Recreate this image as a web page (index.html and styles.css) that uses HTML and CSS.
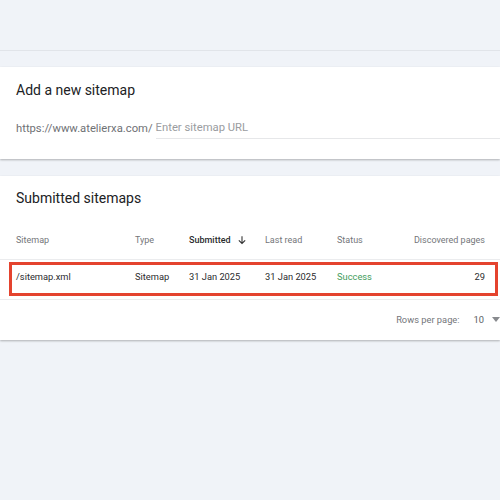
FILE: index.html
```html
<!DOCTYPE html>
<html>
<head>
<meta charset="utf-8">
<link rel="stylesheet" href="styles.css">
</head>
<body>
<div class="topbar"></div>
<section class="card card-add">
  <h2 class="card-title">Add a new sitemap</h2>
  <div class="url-row">
    <span class="prefix">https://www.atelierxa.com/</span>
    <span class="input">Enter sitemap URL</span>
  </div>
</section>
<section class="card card-list">
  <h2 class="card-title">Submitted sitemaps</h2>
  <div class="grid head">
    <span>Sitemap</span>
    <span>Type</span>
    <span class="sorted">Submitted <svg class="arrow" viewBox="0 0 12 12" width="10" height="10"><path d="M6 1.5v8.5M2.2 6.4L6 10.2l3.8-3.8" fill="none" stroke="#333" stroke-width="1.3"/></svg></span>
    <span>Last read</span>
    <span>Status</span>
    <span class="num">Discovered pages</span>
  </div>
  <div class="grid row">
    <span>/sitemap.xml</span>
    <span>Sitemap</span>
    <span>31 Jan 2025</span>
    <span>31 Jan 2025</span>
    <span class="ok">Success</span>
    <span class="num">29</span>
    <div class="highlight"></div>
  </div>
  <div class="pager">
    <span class="pager-label">Rows per page:</span>
    <span class="pager-value">10</span>
    <span class="caret"></span>
  </div>
</section>
</body>
</html>
```
FILE: styles.css
```css
html, body {
  margin: 0;
  padding: 0;
}
body {
  background: #f0f3f8;
  font-family: Roboto, "Liberation Sans", sans-serif;
  color: #202124;
  width: 500px;
  height: 500px;
  overflow: hidden;
}
.topbar {
  height: 50px;
  border-bottom: 1px solid #e1e4e9;
}
.card {
  background: #fff;
  box-shadow: 0 1px 2px rgba(0, 0, 0, 0.28);
}
.card-add {
  margin-top: 16px;
  height: 92px;
  box-sizing: border-box;
  padding-top: 13px;
}
.card-title {
  margin: 0;
  padding-left: 16px;
  font-size: 14px;
  line-height: 20px;
  font-weight: 400;
  color: #202124;
}
.url-row {
  display: flex;
  align-items: flex-end;
  margin-top: 20px;
  padding-left: 16px;
  font-size: 11.25px;
  line-height: 16px;
}
.prefix {
  color: #6f7175;
  padding-bottom: 2px;
}
.input {
  flex: 1;
  margin-left: 3px;
  color: #9a9ca0;
  padding-bottom: 2px;
  border-bottom: 1px solid #e6e7e9;
}
.card-list {
  margin-top: 17px;
  height: 164px;
  box-sizing: border-box;
  padding-top: 12px;
}
.grid {
  display: grid;
  grid-template-columns: 119px 54px 76px 72px 1fr 100px;
  padding: 0 15px 0 16px;
  font-size: 9px;
  line-height: 12px;
}
.head {
  height: 52px;
  box-sizing: border-box;
  align-items: end;
  padding-bottom: 13px;
  color: #74767a;
  border-bottom: 1px solid #ebecee;
}
.sorted {
  color: #2b2c2e;
  font-weight: 500;
  display: flex;
  align-items: center;
  gap: 6px;
}
.num {
  text-align: right;
}
.row {
  position: relative;
  height: 40px;
  box-sizing: border-box;
  align-items: center;
  padding-bottom: 5px;
  font-size: 9.3px;
  color: #2b2c2e;
  border-bottom: 1px solid #ebecee;
}
.ok {
  color: #3f9d5c;
}
.highlight {
  position: absolute;
  left: 9px;
  right: 2px;
  top: 2px;
  bottom: 3px;
  border: 3px solid #e4432e;
  pointer-events: none;
}
.pager {
  display: flex;
  justify-content: flex-end;
  align-items: center;
  height: 39px;
  font-size: 9.3px;
  color: #74767a;
}
.pager-label {
  margin-right: 14px;
}
.pager-value {
  color: #5c5e62;
  margin-right: 8px;
}
.caret {
  width: 0;
  height: 0;
  border-left: 4.5px solid transparent;
  border-right: 4.5px solid transparent;
  border-top: 5px solid #888a8e;
}
```
